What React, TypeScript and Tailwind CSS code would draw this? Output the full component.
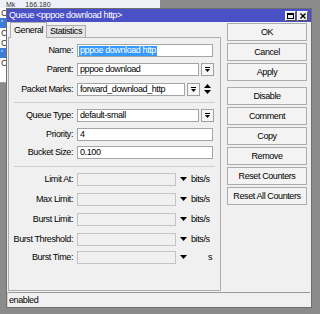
const font = "font-['Liberation_Sans',Arial,sans-serif] text-[9px] tracking-[-0.4px] leading-none text-black";

function DropBtn() {
  return (
    <div className="w-[13px] h-[13px] ml-[2px] border border-[#a0a0a0] bg-[#f6f6f6] flex items-center justify-center">
      <svg width="7" height="7" viewBox="0 0 7 7">
        <rect x="1" y="1" width="5" height="1" fill="#000" />
        <path d="M1 3h5l-2.5 3z" fill="#000" />
      </svg>
    </div>
  );
}

function Row({ label, mt, children }: { label: string; mt: string; children: React.ReactNode }) {
  return (
    <div className={`flex items-center h-[13px] ${mt}`}>
      <div className="w-[64px] text-right whitespace-nowrap">{label}</div>
      <div className="ml-[4px] flex items-center">{children}</div>
    </div>
  );
}

function TextBox({ w, value }: { w: string; value: string }) {
  return (
    <div className={`${w} h-[13px] border border-[#a5a5a5] bg-white flex items-center pl-[2px] whitespace-nowrap overflow-hidden`}>
      {value}
    </div>
  );
}

function RateRow({ label, mt, unit }: { label: string; mt: string; unit: string }) {
  return (
    <Row label={label} mt={mt}>
      <div className="w-[99px] h-[13px] border border-[#c4c4c4] bg-[#f0f0f0]" />
      <svg className="ml-[4px]" width="7" height="5" viewBox="0 0 7 5">
        <path d="M0 0h7l-3.5 4z" fill="#000" />
      </svg>
      {unit === "s" ? (
        <div className="w-[27px] text-right pr-[2px]">s</div>
      ) : (
        <div className="ml-[4px]">{unit}</div>
      )}
    </Row>
  );
}

const buttons1 = ["OK", "Cancel", "Apply"];
const buttons2 = ["Disable", "Comment", "Copy", "Remove", "Reset Counters", "Reset All Counters"];

function Btn({ label }: { label: string }) {
  return (
    <div className="h-[18px] border border-[#acacac] bg-[#f3f3f3] flex items-center justify-center whitespace-nowrap">
      {label}
    </div>
  );
}

export default function App() {
  return (
    <div className={`relative w-[320px] h-[314px] bg-[#8b8b8b] overflow-hidden ${font}`}>
      {/* window behind */}
      <div className="absolute left-0 top-0 w-[160px] h-[83px] bg-white border-b border-[#a0a0a0]">
        <div className="h-[8px] bg-[#eef2f8] flex items-center pl-[6px] gap-[10px] text-[#333] text-[7px] tracking-normal">
          <span>Mk</span>
          <span>166.180</span>
        </div>
        <div className="flex flex-col text-[#333]">
          <div className="h-[10px] pl-[1px] flex items-center">C</div>
          <div className="h-[10px] bg-[#3d7bd6] text-white pl-[1px] flex items-center">'</div>
          <div className="h-[10px] pl-[1px] flex items-center">C</div>
          <div className="h-[10px] pl-[1px] flex items-center">C</div>
          <div className="h-[10px] bg-[#3d7bd6] text-white pl-[1px] flex items-center">'</div>
          <div className="h-[10px] pl-[1px] flex items-center">C</div>
        </div>
      </div>

      {/* dialog */}
      <div className="absolute left-[6px] top-[8px] w-[306px] h-[300px] border border-[#6e6e6e] bg-[#f0f0f0] flex flex-col">
        <div className="h-[13px] bg-[#4a50c6] flex items-center pl-[2px] pr-[3px] text-white">
          <span className="flex-1">Queue &lt;pppoe download http&gt;</span>
          <div className="w-[11px] h-[10px] bg-[#ececec] border border-[#fff] border-r-[#555] border-b-[#555] flex items-center justify-center">
            <div className="w-[7px] h-[6px] border border-black border-t-2" />
          </div>
          <div className="w-[11px] h-[10px] ml-[1px] bg-[#ececec] border border-[#fff] border-r-[#555] border-b-[#555] flex items-center justify-center">
            <svg width="6" height="6" viewBox="0 0 6 6">
              <path d="M0.5 0.5l5 5M5.5 0.5l-5 5" stroke="#000" strokeWidth="1.4" />
            </svg>
          </div>
        </div>

        <div className="flex pl-[1px]">
          <div className="w-[213px] flex flex-col">
            <div className="h-[15px] flex items-end pl-[2px]">
              <div className="h-[16px] w-[37px] -mb-[1px] relative z-10 border border-b-0 border-[#adadad] bg-[#f0f0f0] pl-[3px] flex items-center">
                General
              </div>
              <div className="h-[12px] w-[39px] border border-l-0 border-b-0 border-[#adadad] bg-[#e6e6e6] pl-[3px] flex items-center">
                Statistics
              </div>
            </div>
            <div className="h-[254px] border border-[#adadad] flex flex-col">
              <Row label="Name:" mt="mt-[6px]">
                <div className="w-[136px] h-[13px] border border-[#a5a5a5] bg-white flex items-center pl-[1px]">
                  <span className="bg-[#3399ff] text-white px-[1px] h-[10px] flex items-center">pppoe download http</span>
                </div>
              </Row>
              <Row label="Parent:" mt="mt-[6px]">
                <TextBox w="w-[122px]" value="pppoe download" />
                <DropBtn />
              </Row>
              <Row label="Packet Marks:" mt="mt-[7px]">
                <TextBox w="w-[108px]" value="forward_download_http" />
                <DropBtn />
                <svg className="ml-[4px]" width="7" height="11" viewBox="0 0 7 11">
                  <path d="M0 4h7l-3.5-4z" fill="#000" />
                  <path d="M0 6h7l-3.5 4z" fill="#000" />
                </svg>
              </Row>
              <div className="mt-[6px] mx-[5px] h-px bg-[#cfcfcf]" />
              <Row label="Queue Type:" mt="mt-[6px]">
                <TextBox w="w-[122px]" value="default-small" />
                <DropBtn />
              </Row>
              <Row label="Priority:" mt="mt-[6px]">
                <TextBox w="w-[136px]" value="4" />
              </Row>
              <Row label="Bucket Size:" mt="mt-[5px]">
                <TextBox w="w-[136px]" value="0.100" />
              </Row>
              <div className="mt-[7px] mx-[5px] h-px bg-[#cfcfcf]" />
              <RateRow label="Limit At:" mt="mt-[6px]" unit="bits/s" />
              <RateRow label="Max Limit:" mt="mt-[7px]" unit="bits/s" />
              <RateRow label="Burst Limit:" mt="mt-[7px]" unit="bits/s" />
              <RateRow label="Burst Threshold:" mt="mt-[7px]" unit="bits/s" />
              <RateRow label="Burst Time:" mt="mt-[5px]" unit="s" />
            </div>
          </div>

          <div className="w-[80px] ml-[6px] mt-[1px] flex flex-col">
            <div className="flex flex-col gap-[2px]">
              {buttons1.map((b) => (
                <Btn key={b} label={b} />
              ))}
            </div>
            <div className="flex flex-col gap-[2px] mt-[6px]">
              {buttons2.map((b) => (
                <Btn key={b} label={b} />
              ))}
            </div>
          </div>
        </div>

        <div className="mt-[1px] h-[15px] border-t border-[#9a9a9a] border-l border-l-[#d0d0d0] mr-[1px] flex items-center pl-[1px]">
          enabled
        </div>
      </div>
    </div>
  );
}
